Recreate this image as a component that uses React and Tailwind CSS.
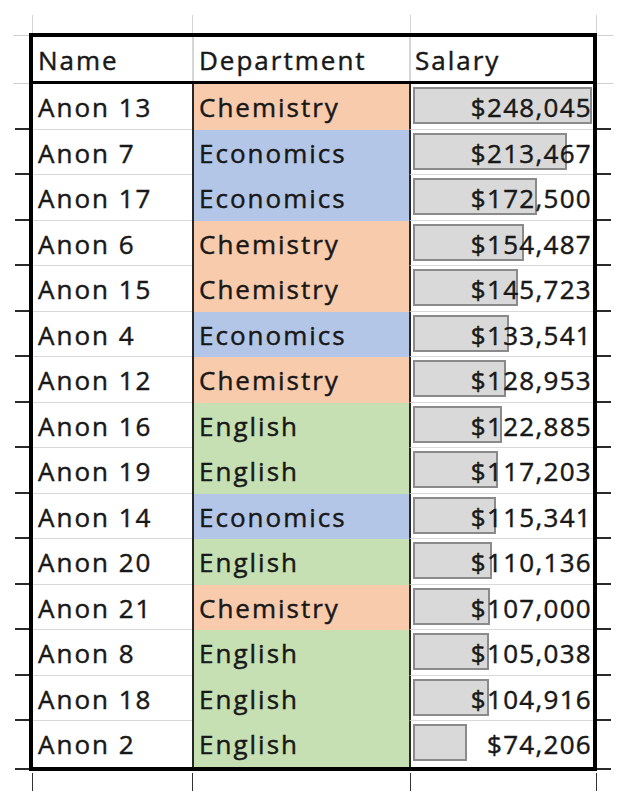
import React from "react";

const rows = [
  ["Anon 13", "Chemistry", 248045],
  ["Anon 7", "Economics", 213467],
  ["Anon 17", "Economics", 172500],
  ["Anon 6", "Chemistry", 154487],
  ["Anon 15", "Chemistry", 145723],
  ["Anon 4", "Economics", 133541],
  ["Anon 12", "Chemistry", 128953],
  ["Anon 16", "English", 122885],
  ["Anon 19", "English", 117203],
  ["Anon 14", "Economics", 115341],
  ["Anon 20", "English", 110136],
  ["Anon 21", "Chemistry", 107000],
  ["Anon 8", "English", 105038],
  ["Anon 18", "English", 104916],
  ["Anon 2", "English", 74206],
];

const deptBg = {
  Chemistry: "bg-[#f8cbad]",
  Economics: "bg-[#b4c6e7]",
  English: "bg-[#c6e0b4]",
};

const MAX = 248045;
const BAR_MAX = 179;

const Gutter = ({ side }) => {
  const tickPos = side === "left" ? "ml-auto" : "mr-auto";
  return (
    <div className="flex w-[29px] flex-col">
      <div className={`h-[3px] w-[16px] ${tickPos} border-b border-[#cfcfcf]`} />
      <div className="h-[45px]" />
      <div className={`h-[3px] w-[16px] ${tickPos} border-b border-[#cfcfcf]`} />
      {rows.slice(0, -1).map((r, i) => (
        <div
          key={i}
          className={`h-[45.53px] w-[14px] ${tickPos} border-b-2 border-[#2a2a2a]`}
        />
      ))}
      <div className="h-[45.53px]" />
      <div className={`h-[3px] w-[14px] ${tickPos} border-b-2 border-[#2a2a2a]`} />
    </div>
  );
};

const App = () => {
  return (
    <div
      className="h-[805px] w-[626px] overflow-hidden bg-white pt-[15px] text-[26px] tracking-[2px] text-[#181818] [-webkit-text-stroke:0.45px_#181818]"
      style={{ fontFamily: '"Open Sans", "Noto Sans", sans-serif' }}
    >
      <div className="ml-[32px] flex h-[18px]">
        <div className="w-[160px] border-l border-[#d4d4d4]" />
        <div className="w-[218px] border-l border-[#d4d4d4]" />
        <div className="w-[186px] border-l border-[#d4d4d4]" />
        <div className="w-px border-l border-[#d4d4d4]" />
      </div>

      <div className="flex">
        <Gutter side="left" />

        <div className="w-[568px] border-4 border-black">
          <div className="grid h-[47px] grid-cols-[159px_217px_184px] border-b-[3px] border-black">
            <div className="pl-[5px] pt-[6px] leading-[35px]">Name</div>
            <div className="border-l-2 border-[#d6d6d6] pl-[5px] pt-[6px] leading-[35px]">Department</div>
            <div className="border-l-2 border-[#d6d6d6] pl-[4px] pt-[6px] leading-[35px]">Salary</div>
          </div>

          {rows.map(([name, dept, salary], i) => {
            const last = i === rows.length - 1;
            const line = last ? "" : "border-b border-[#d9d9d9]";
            return (
              <div key={name} className="grid h-[45.53px] grid-cols-[159px_217px_184px]">
                <div className={`pl-[5px] pt-[6px] leading-[35px] ${line}`}>{name}</div>
                <div className={`border-l-2 border-l-[#262626] pl-[5px] pt-[6px] leading-[35px] ${deptBg[dept]}`}>
                  {dept}
                </div>
                <div className={`grid border-l-2 border-l-[#262626] ${line}`}>
                  <div className="col-start-1 row-start-1 pl-[2px] pt-[3px]">
                    <div
                      className="h-[37px] border-2 border-[#8a8a8a] bg-[#d9d9d9]"
                      style={{ width: `${(salary / MAX) * BAR_MAX}px` }}
                    />
                  </div>
                  <div className="col-start-1 row-start-1 pr-[1px] pt-[6px] text-right leading-[35px] tracking-[1.3px]">
                    ${salary.toLocaleString("en-US")}
                  </div>
                </div>
              </div>
            );
          })}
        </div>

        <Gutter side="right" />
      </div>

      <div className="ml-[32px] mt-[2px] flex h-[18px]">
        <div className="w-[160px] border-l border-[#333]" />
        <div className="w-[218px] border-l border-[#333]" />
        <div className="w-[186px] border-l border-[#333]" />
        <div className="w-px border-l border-[#333]" />
      </div>
    </div>
  );
};

export default App;
